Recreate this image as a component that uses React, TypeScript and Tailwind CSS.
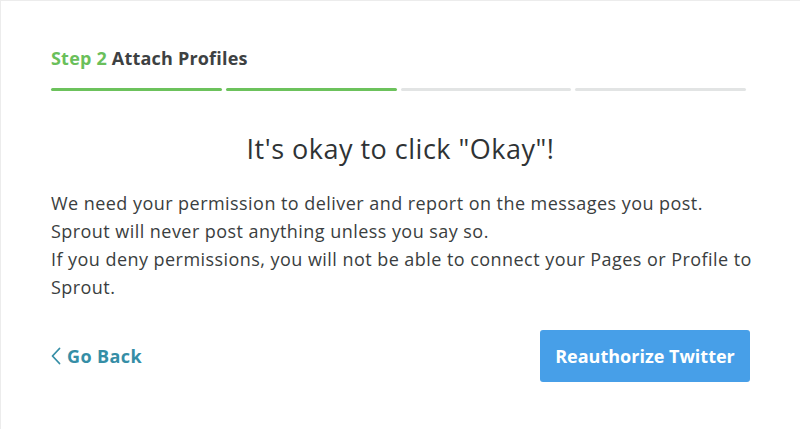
import React from "react";

export default function App() {
  const font = { fontFamily: "'Open Sans', 'Noto Sans', sans-serif" };
  return (
    <div className="w-[800px] h-[429px] bg-white border-t border-l border-[#ececec] box-border" style={font}>
      <div className="px-[50px] pt-[44px]">
        <div className="text-[18px] font-bold leading-[26px] tracking-[0.2px] text-[#3d4142]">
          <span className="text-[#6abf5b]">Step 2</span> Attach Profiles
        </div>
        <div className="flex mt-[17px]">
          <div className="w-[175px] pr-[4px]"><div className="h-[3px] rounded-full bg-[#6cc25c]" /></div>
          <div className="w-[175px] pr-[4px]"><div className="h-[3px] rounded-full bg-[#6cc25c]" /></div>
          <div className="w-[175px] pr-[4px]"><div className="h-[3px] rounded-full bg-[#e2e4e4]" /></div>
          <div className="w-[175px] pr-[4px]"><div className="h-[3px] rounded-full bg-[#e2e4e4]" /></div>
        </div>
        <h1 className="text-center text-[27px] leading-[36px] tracking-[0.5px] text-[#2f3335] mt-[40px]">It's okay to click "Okay"!</h1>
        <div className="mt-[22px] w-[730px] text-[18px] leading-[28px] tracking-[0.45px] text-[#3a3e40]">
          <p>We need your permission to deliver and report on the messages you post.</p>
          <p>Sprout will never post anything unless you say so.</p>
          <p>If you deny permissions, you will not be able to connect your Pages or Profile to Sprout.</p>
        </div>
        <div className="flex items-center justify-between mt-[29px]">
          <div className="flex items-center gap-[6px] text-[#358ea6] font-bold text-[18px] tracking-[0.4px]">
            <svg width="10" height="18" viewBox="0 0 10 18" fill="none" stroke="#358ea6" strokeWidth="1.8" strokeLinecap="round" strokeLinejoin="round">
              <path d="M8.5 1.5 L1.5 9 L8.5 16.5" />
            </svg>
            <span>Go Back</span>
          </div>
          <button className="bg-[#479fe8] text-white font-bold text-[18px] rounded-[3px] w-[210px] h-[52px]">Reauthorize Twitter</button>
        </div>
      </div>
    </div>
  );
}
